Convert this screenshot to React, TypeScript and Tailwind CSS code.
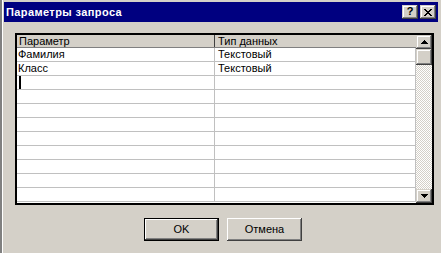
import React from "react";

const raised =
  "shadow-[inset_-1px_-1px_#404040,inset_1px_1px_#d4d0c8,inset_-2px_-2px_#808080,inset_2px_2px_#ffffff]";
const pushRaised =
  "shadow-[inset_-1px_-1px_#404040,inset_1px_1px_#ffffff,inset_-2px_-2px_#808080,inset_2px_2px_#d4d0c8]";
const defaultRaised =
  "shadow-[inset_0_0_0_1px_#000000,inset_-2px_-2px_#404040,inset_2px_2px_#ffffff,inset_-3px_-3px_#808080]";

function Arrow({ up }: { up?: boolean }) {
  return (
    <svg width="7" height="4" viewBox="0 0 7 4" className={up ? "rotate-180" : ""}>
      <path d="M0 0H7V1H6V2H5V3H4V4H3V3H2V2H1V1H0Z" fill="#000" />
    </svg>
  );
}

const rows: [string, string][] = [
  ["Фамилия", "Текстовый"],
  ["Класс", "Текстовый"],
  ["", ""],
  ["", ""],
  ["", ""],
  ["", ""],
  ["", ""],
  ["", ""],
  ["", ""],
  ["", ""],
  ["", ""],
];

export default function App() {
  return (
    <div className="w-[441px] h-[253px] bg-[#d4d0c8] flex overflow-hidden font-['Liberation_Sans',Arial,sans-serif] text-[11px] text-black leading-none">
      <div className="w-[2px] h-full bg-[#808080] shrink-0" />
      <div className="w-px h-full bg-white shrink-0" />
      <div className="flex-1 flex flex-col pt-[2px] pl-px pr-[3px]">
        {/* Title bar */}
        <div className="h-[20px] bg-[#000080] flex items-center pl-[2px] pr-[2px]">
          <span className="flex-1 text-white font-bold text-[11px] tracking-[0.4px]">
            Параметры запроса
          </span>
          <div className={`w-[16px] h-[14px] bg-[#d4d0c8] ${raised} flex items-center justify-center`}>
            <span className="font-bold text-[11px] leading-none -mt-px">?</span>
          </div>
          <div className={`ml-[2px] w-[16px] h-[14px] bg-[#d4d0c8] ${raised} flex items-center justify-center`}>
            <svg width="8" height="7" viewBox="0 0 8 7" shapeRendering="crispEdges">
              <path d="M0 0h2v1h1v1h2V1h1V0h2v1H7v1H6v1H5v1h1v1h1v1h1v1H6V6H5V5H3v1H2v1H0V6h1V5h1V4h1V3H2V2H1V1H0Z" fill="#000" />
            </svg>
          </div>
        </div>

        {/* Grid */}
        <div className="mt-[11px] ml-[11px] w-[419px] h-[172px] border-2 border-black bg-white flex">
          <div className="flex-1 flex flex-col">
            <div className="h-[13px] flex bg-[#d4d0c8] border-b border-[#808080]">
              <div className="w-[198px] border-r border-[#404040] pl-[2px] flex items-center">
                Параметр
              </div>
              <div className="flex-1 pl-[3px] flex items-center">Тип данных</div>
            </div>
            {rows.map(([a, b], i) => (
              <div key={i} className="h-[14px] flex border-b border-[#c0c0c0]">
                <div className="w-[198px] border-r border-[#c0c0c0] pl-[1px] flex items-center">
                  {i === 2 ? <div className="ml-px w-[2px] h-[13px] bg-black" /> : a}
                </div>
                <div className="flex-1 pl-[3px] flex items-center border-r border-[#c0c0c0]">{b}</div>
              </div>
            ))}
          </div>
          {/* Scrollbar */}
          <div className="w-[16px] flex flex-col">
            <div className={`h-[14px] bg-[#d4d0c8] ${raised} flex items-center justify-center`}>
              <Arrow up />
            </div>
            <div className={`h-[16px] bg-[#d4d0c8] ${raised}`} />
            <div className="flex-1 bg-[image:repeating-conic-gradient(#d4d0c8_0%_25%,#ffffff_0%_50%)] bg-[length:2px_2px]" />
            <div className={`h-[14px] bg-[#d4d0c8] ${raised} flex items-center justify-center`}>
              <Arrow />
            </div>
          </div>
        </div>

        {/* Buttons */}
        <div className="mt-[13px] ml-[140px] flex gap-[8px]">
          <div className={`w-[75px] h-[23px] bg-[#d4d0c8] ${defaultRaised} flex items-center justify-center`}>
            OK
          </div>
          <div className={`w-[75px] h-[23px] bg-[#d4d0c8] ${pushRaised} flex items-center justify-center`}>
            Отмена
          </div>
        </div>
      </div>
    </div>
  );
}
